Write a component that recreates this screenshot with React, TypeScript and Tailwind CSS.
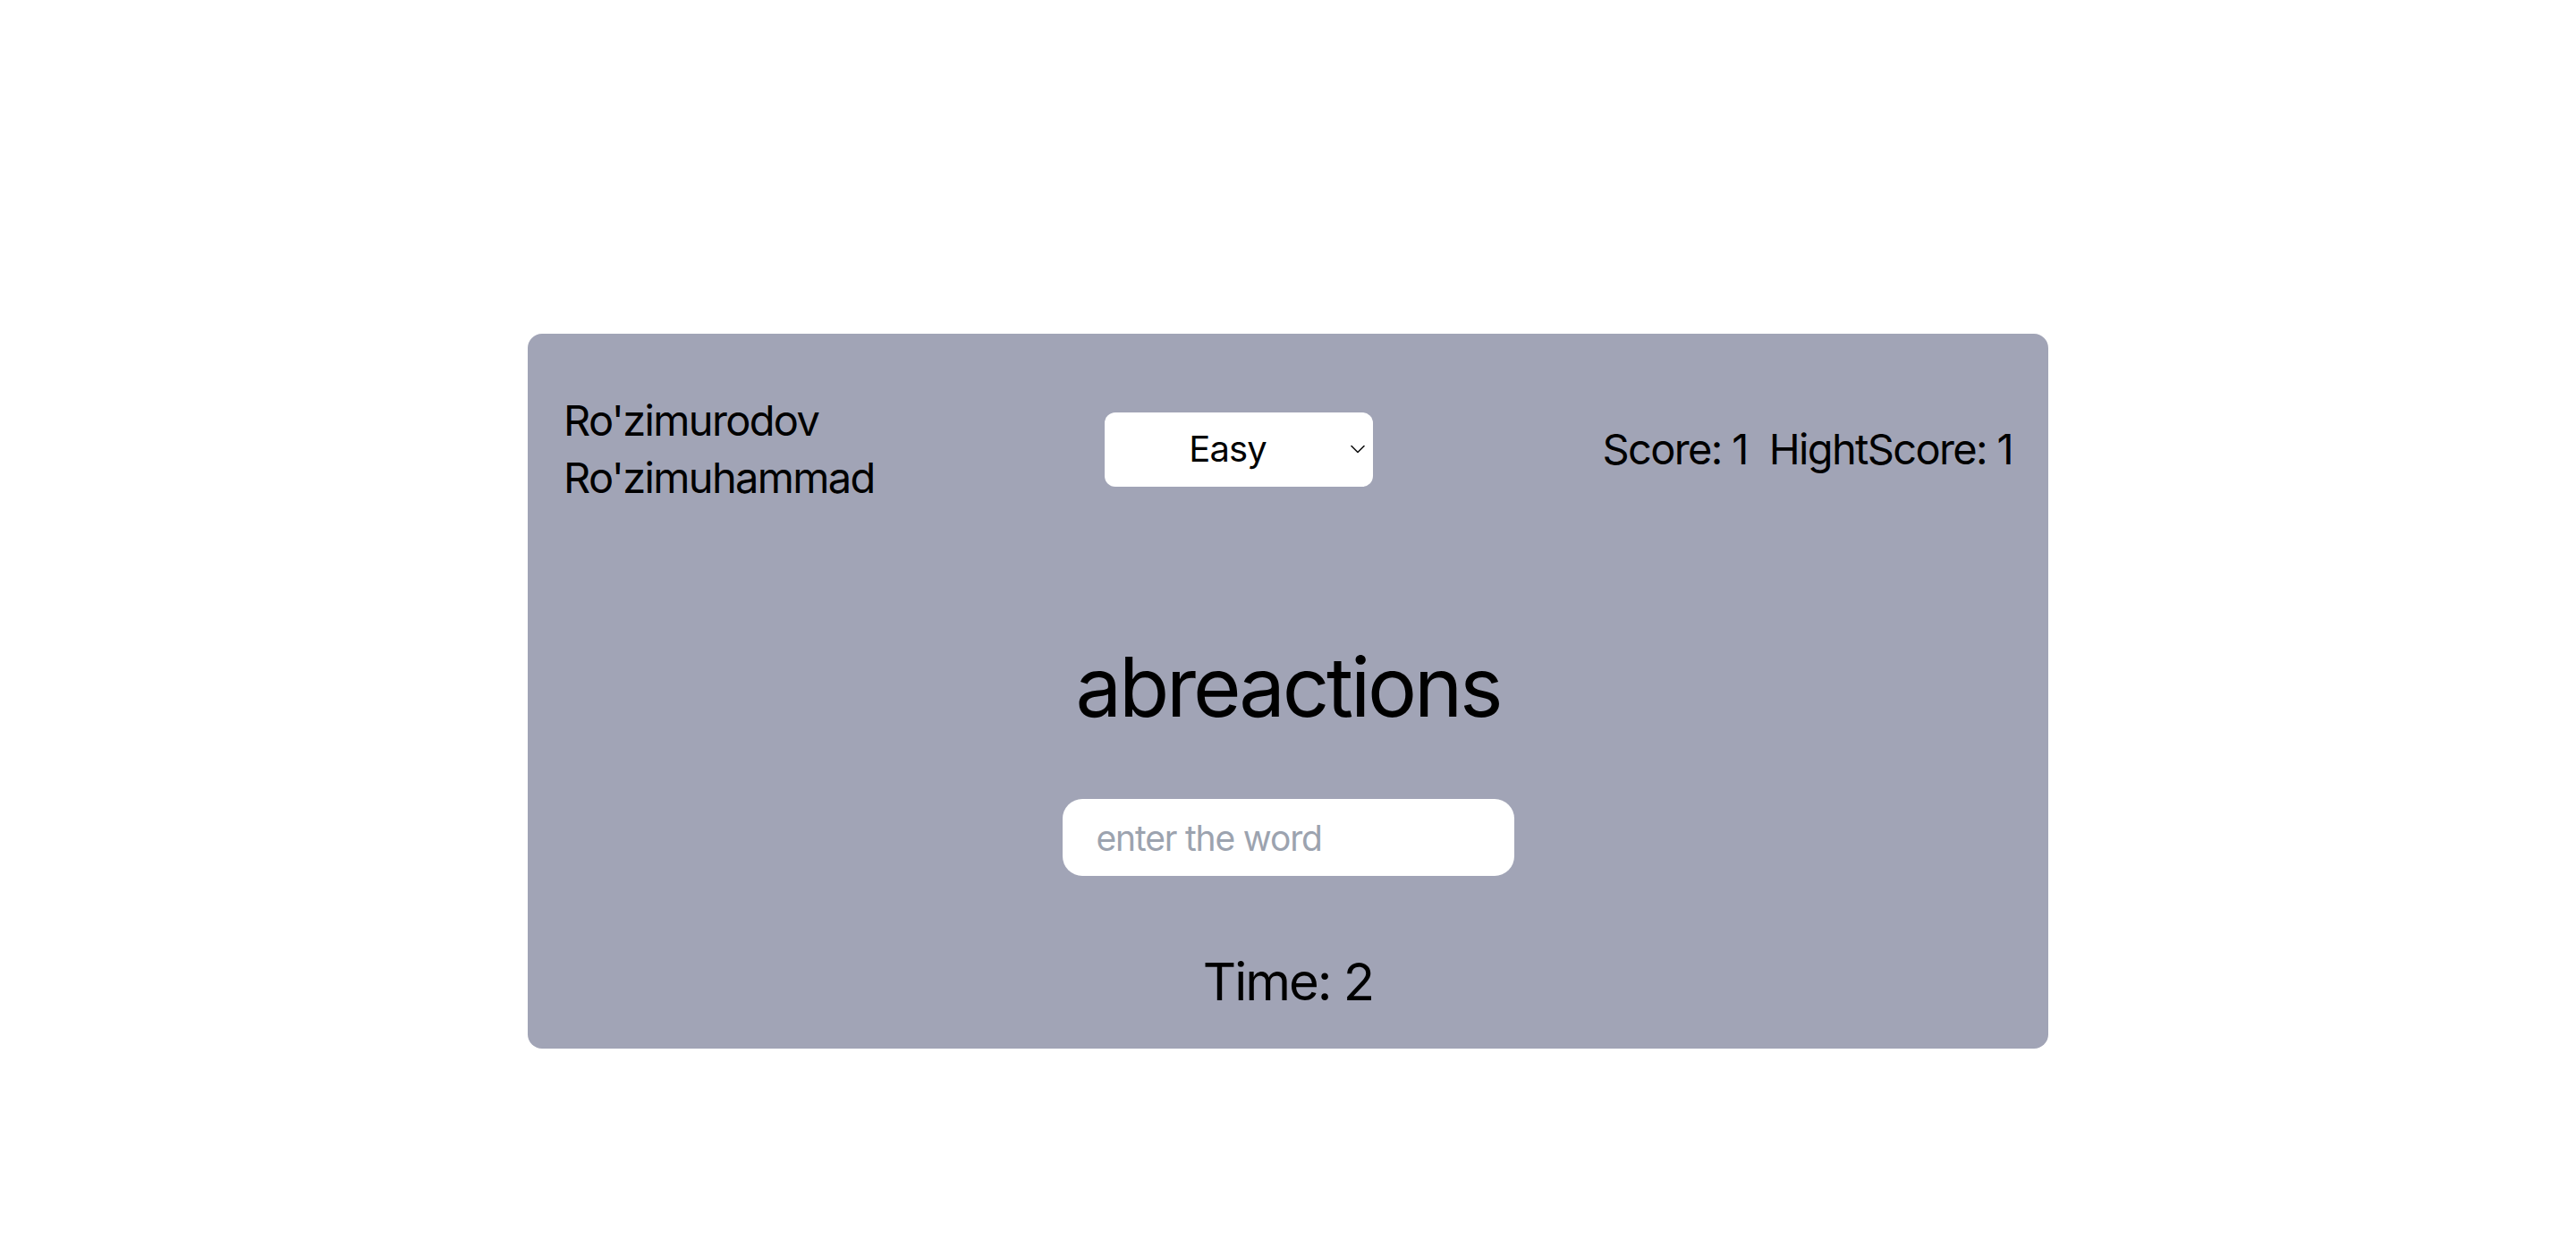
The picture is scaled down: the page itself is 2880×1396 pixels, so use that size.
import { useState } from 'react';

const levels = ['Easy', 'Medium', 'Hard'];

export default function App() {
  const [level, setLevel] = useState('Easy');
  const [text, setText] = useState('');
  const score = 1;
  const highScore = 1;
  const time = 2;
  const word = 'abreactions';

  return (
    <div
      className="min-h-screen bg-white pt-[373px] text-black"
      style={{ fontFamily: 'Inter, "Liberation Sans", sans-serif' }}
    >
      <div className="mx-auto w-[1700px] rounded-[16px] bg-[#a1a4b6] px-[40px] pt-[65px] pb-[39px]">
        {/* top bar */}
        <div className="flex items-center justify-between">
          <div className="text-[47px] leading-[64px] tracking-[-0.035em]">
            <div>Ro'zimurodov</div>
            <div>Ro'zimuhammad</div>
          </div>

          <div className="relative">
            <select
              value={level}
              onChange={(e) => setLevel(e.target.value)}
              className="h-[83px] w-[300px] appearance-none rounded-[12px] bg-white pr-[24px] text-center text-[40px] tracking-[-0.02em] outline-none"
            >
              {levels.map((l) => (
                <option key={l} value={l}>
                  {l}
                </option>
              ))}
            </select>
            <svg
              className="pointer-events-none absolute right-[9px] top-1/2 -translate-y-1/2"
              width="16"
              height="10"
              viewBox="0 0 16 10"
              fill="none"
            >
              <path d="M1 1.5l7 7 7-7" stroke="#111" strokeWidth="1.6" strokeLinecap="round" strokeLinejoin="round" />
            </svg>
          </div>

          <div className="flex gap-[24px] text-[47px] leading-[64px] tracking-[-0.035em]">
            <span>Score: {score}</span>
            <span>HightScore: {highScore}</span>
          </div>
        </div>

        {/* current word */}
        <h1 className="mt-[154px] text-center text-[92px] leading-[96px] tracking-[-0.035em]">{word}</h1>

        <input
          autoFocus
          value={text}
          onChange={(e) => setText(e.target.value)}
          placeholder="enter the word"
          className="mx-auto mt-[77px] block h-[86px] w-[505px] rounded-[22px] bg-white px-[38px] text-[39px] tracking-[-0.03em] caret-black outline-none placeholder:text-[#9ca3af]"
        />

        <p className="mt-[82px] text-center text-[58px] leading-[72px] tracking-[-0.035em]">Time: {time}</p>
      </div>
    </div>
  );
}
